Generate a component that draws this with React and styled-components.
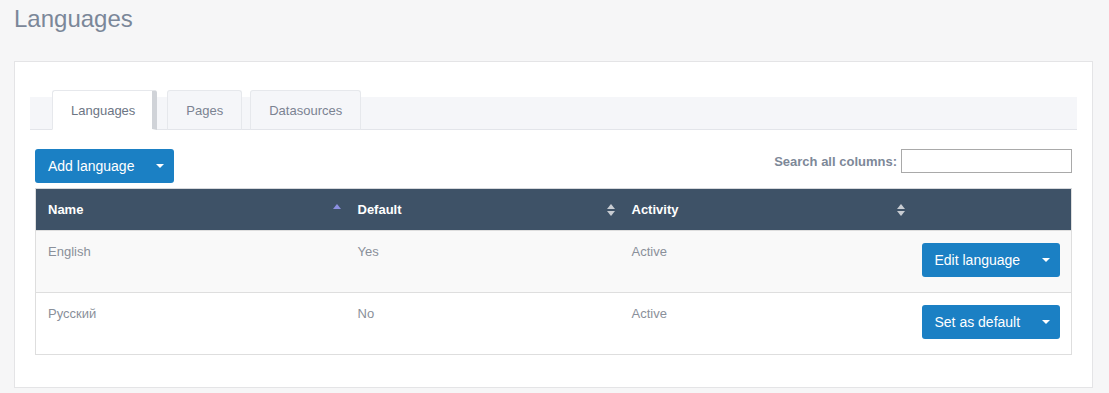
import React from 'react';
import styled, { createGlobalStyle } from 'styled-components';

const GlobalStyle = createGlobalStyle`
  html, body {
    margin: 0;
    padding: 0;
    background: #f6f6f7;
    font-family: "Liberation Sans", Arial, sans-serif;
  }
`;

const Page = styled.div`
  padding: 4px 16px 6px 14px;
`;

const Title = styled.h1`
  margin: 0 0 27px;
  font-size: 24px;
  font-weight: normal;
  line-height: 30px;
  color: #7b8799;
`;

const Panel = styled.div`
  background: #fff;
  border: 1px solid #e4e4e6;
  padding: 27px 15px 32px;
`;

const TabBar = styled.div`
  display: flex;
  align-items: flex-end;
  height: 32px;
  margin-top: 8px;
  padding-left: 22px;
  background: #f5f6f9;
  border-bottom: 1px solid #e3e5ea;
`;

const Tab = styled.div`
  height: 40px;
  box-sizing: border-box;
  margin-right: ${({ $active }) => ($active ? '10px' : '8px')};
  padding: 0 ${({ $active }) => ($active ? '17px' : '18px')} 0 18px;
  display: flex;
  align-items: center;
  font-size: 13px;
  color: ${({ $active }) => ($active ? '#6c7584' : '#7b8392')};
  background: ${({ $active }) => ($active ? '#fff' : '#f5f6f9')};
  border: 1px solid #e6e8ec;
  border-bottom: ${({ $active }) => ($active ? '1px solid #fff' : '1px solid #e3e5ea')};
  border-right: ${({ $active }) => ($active ? '5px solid #d0d3d8' : '1px solid #e6e8ec')};
  border-radius: 3px 3px 0 0;
  margin-bottom: -1px;
`;

const Content = styled.div`
  padding: 19px 5px 0;
`;

const Toolbar = styled.div`
  display: flex;
  justify-content: space-between;
  align-items: flex-start;
  margin-bottom: 5px;
`;

const SplitButton = styled.button`
  display: flex;
  align-items: center;
  height: 34px;
  width: ${({ $width }) => $width}px;
  padding: 0 0 0 13px;
  border: 0;
  border-radius: 3px;
  background: #1b80c4;
  color: #fff;
  font-family: inherit;
  font-size: 14px;
  cursor: pointer;

  span {
    flex: 1;
    text-align: left;
  }
`;

const CaretBox = styled.i`
  width: 28px;
  display: flex;
  justify-content: center;
`;

const Caret = () => (
  <CaretBox>
    <svg width="8" height="4" viewBox="0 0 8 4">
      <path d="M0 0h8L4 4z" fill="#fff" />
    </svg>
  </CaretBox>
);

const Search = styled.label`
  display: flex;
  align-items: center;
  gap: 4px;
  font-size: 13px;
  font-weight: bold;
  color: #7d8898;

  input {
    width: 171px;
    height: 24px;
    box-sizing: border-box;
    border: 1px solid #a9a9a9;
    outline: none;
  }
`;

const Table = styled.table`
  width: 100%;
  border-collapse: collapse;
  border: 1px solid #dedede;
  table-layout: fixed;
`;

const Th = styled.th`
  position: relative;
  box-sizing: border-box;
  height: 42px;
  padding: 0 12px;
  background: #3e5267;
  color: #fff;
  font-size: 13px;
  font-weight: bold;
  text-align: left;
  width: ${({ $w }) => ($w ? `${$w}px` : 'auto')};
  border-top: 1px solid #d6d8dc;
`;

const SortIcon = styled.svg`
  position: absolute;
  right: 5px;
  top: 50%;
  transform: translateY(-50%);
`;

const Row = styled.tr`
  background: ${({ $odd }) => ($odd ? '#f9f9f9' : '#fff')};
  border-top: 1px solid #dedede;
`;

const Td = styled.td`
  height: 62px;
  box-sizing: border-box;
  padding: 12px 12px;
  vertical-align: top;
  font-size: 13px;
  line-height: 18px;
  color: #8a909a;

  button {
    margin-left: auto;
  }
`;

const Sort = ({ dir }) => (
  <SortIcon width="8" height="14" viewBox="0 0 8 14">
    {dir === 'asc' ? (
      <path d="M0 6L4 1 8 6z" fill="#8b8fe0" />
    ) : (
      <>
        <path d="M0 6L4 1 8 6z" fill="#c8ccd2" />
        <path d="M0 8h8L4 13z" fill="#c8ccd2" />
      </>
    )}
  </SortIcon>
);

const rows = [
  { name: 'English', def: 'Yes', act: 'Active', action: 'Edit language' },
  { name: 'Русский', def: 'No', act: 'Active', action: 'Set as default' },
];

export default function App() {
  return (
    <>
      <GlobalStyle />
      <Page>
        <Title>Languages</Title>
        <Panel>
          <TabBar>
            <Tab $active>Languages</Tab>
            <Tab>Pages</Tab>
            <Tab>Datasources</Tab>
          </TabBar>
          <Content>
            <Toolbar>
              <SplitButton $width={139}>
                <span>Add language</span>
                <Caret />
              </SplitButton>
              <Search>
                Search all columns:
                <input type="text" />
              </Search>
            </Toolbar>
            <Table>
              <thead>
                <tr>
                  <Th $w={310}>Name<Sort dir="asc" /></Th>
                  <Th $w={274}>Default<Sort /></Th>
                  <Th $w={290}>Activity<Sort /></Th>
                  <Th />
                </tr>
              </thead>
              <tbody>
                {rows.map((r, i) => (
                  <Row key={r.name} $odd={i % 2 === 0}>
                    <Td>{r.name}</Td>
                    <Td>{r.def}</Td>
                    <Td>{r.act}</Td>
                    <Td>
                      <SplitButton $width={138}>
                        <span>{r.action}</span>
                        <Caret />
                      </SplitButton>
                    </Td>
                  </Row>
                ))}
              </tbody>
            </Table>
          </Content>
        </Panel>
      </Page>
    </>
  );
}
